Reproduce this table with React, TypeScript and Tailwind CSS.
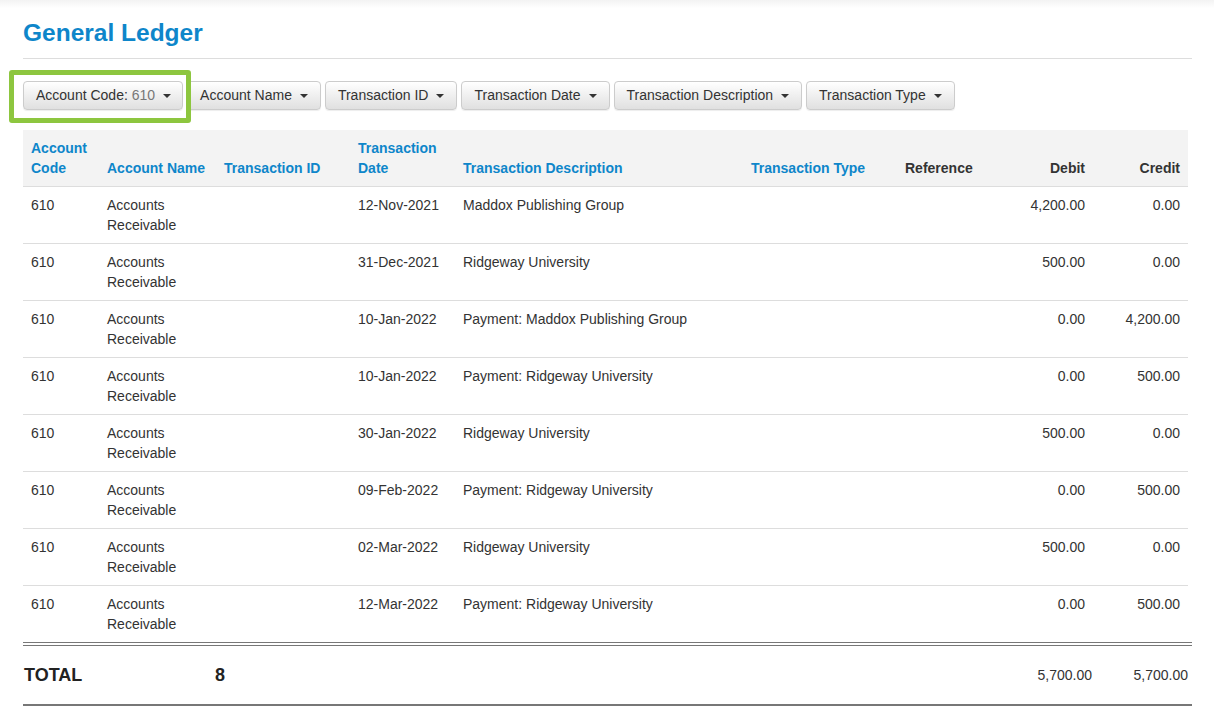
import { ReactNode } from "react"

const rows = [
  { date: "12-Nov-2021", desc: "Maddox Publishing Group", debit: "4,200.00", credit: "0.00" },
  { date: "31-Dec-2021", desc: "Ridgeway University", debit: "500.00", credit: "0.00" },
  { date: "10-Jan-2022", desc: "Payment: Maddox Publishing Group", debit: "0.00", credit: "4,200.00" },
  { date: "10-Jan-2022", desc: "Payment: Ridgeway University", debit: "0.00", credit: "500.00" },
  { date: "30-Jan-2022", desc: "Ridgeway University", debit: "500.00", credit: "0.00" },
  { date: "09-Feb-2022", desc: "Payment: Ridgeway University", debit: "0.00", credit: "500.00" },
  { date: "02-Mar-2022", desc: "Ridgeway University", debit: "500.00", credit: "0.00" },
  { date: "12-Mar-2022", desc: "Payment: Ridgeway University", debit: "0.00", credit: "500.00" },
]

function Caret() {
  return <span className="ml-2 inline-block h-0 w-0 border-x-[4px] border-t-[4px] border-x-transparent border-t-[#333] align-middle" />
}

function FilterButton({ children, first }: { children: ReactNode; first?: boolean }) {
  return (
    <button
      className={`flex h-[29px] items-center rounded-[4px] border border-[#ccc] bg-gradient-to-b from-white to-[#e0e0e0] text-[14px] text-[#333] shadow-[inset_0_1px_0_rgba(255,255,255,0.15),0_1px_1px_rgba(0,0,0,0.075)] ${
        first ? "pl-3 pr-[11px]" : "px-3"
      }`}
    >
      <span>{children}</span>
      <Caret />
    </button>
  )
}

export default function App() {
  return (
    <div className="relative min-h-[721px] w-[1214px] bg-white text-[14px] text-[#333]" style={{ fontFamily: '"Liberation Sans", Arial, sans-serif' }}>
      {/* faint top shadow */}
      <div className="absolute inset-x-0 top-0 h-2 bg-gradient-to-b from-[#f3f3f3] to-white" />

      <div className="relative px-[23px] pr-[22px]">
        <div className="flex h-[59px] items-center border-b border-[#ddd] pt-[8px]">
          <h1 className="text-[24.5px] font-bold leading-none text-[#0e86ca]">General Ledger</h1>
        </div>

        {/* filter bar */}
        <div className="mt-[22px] flex items-center gap-[4px]">
          <div className="relative z-10">
            <FilterButton first>
              Account Code: <span className="text-[#777]">610</span>
            </FilterButton>
            {/* highlight annotation */}
            <div className="pointer-events-none absolute -left-[14px] -right-[8px] -top-[11px] -bottom-[13px] rounded-[3px] border-[5px] border-[#8dc63f]" />
          </div>
          <FilterButton>Account Name</FilterButton>
          <FilterButton>Transaction ID</FilterButton>
          <FilterButton>Transaction Date</FilterButton>
          <FilterButton>Transaction Description</FilterButton>
          <FilterButton>Transaction Type</FilterButton>
        </div>

        {/* ledger table */}
        <table className="mt-[20px] w-[1165px] table-fixed border-collapse text-left leading-[20px]">
          <colgroup>
            <col className="w-[76px]" />
            <col className="w-[117px]" />
            <col className="w-[134px]" />
            <col className="w-[105px]" />
            <col className="w-[288px]" />
            <col className="w-[154px]" />
            <col className="w-[104px]" />
            <col className="w-[92px]" />
            <col className="w-[95px]" />
          </colgroup>
          <thead className="bg-[#f3f3f3]">
            <tr className="border-b border-[#ddd] align-bottom font-bold">
              <th className="p-2 text-[#0e86ca]">Account Code</th>
              <th className="p-2 text-[#0e86ca]">Account Name</th>
              <th className="p-2 text-[#0e86ca]">Transaction ID</th>
              <th className="p-2 text-[#0e86ca]">Transaction Date</th>
              <th className="p-2 text-[#0e86ca]">Transaction Description</th>
              <th className="p-2 text-[#0e86ca]">Transaction Type</th>
              <th className="p-2 text-[#333]">Reference</th>
              <th className="p-2 text-right text-[#333]">Debit</th>
              <th className="p-2 text-right text-[#333]">Credit</th>
            </tr>
          </thead>
          <tbody>
            {rows.map((r, i) => (
              <tr key={i} className="border-t border-[#ddd] align-top first:border-t-0">
                <td className="p-2">610</td>
                <td className="p-2">Accounts Receivable</td>
                <td className="p-2"></td>
                <td className="p-2">{r.date}</td>
                <td className="p-2">{r.desc}</td>
                <td className="p-2"></td>
                <td className="p-2"></td>
                <td className="p-2 text-right">{r.debit}</td>
                <td className="p-2 text-right">{r.credit}</td>
              </tr>
            ))}
          </tbody>
        </table>

        {/* totals */}
        <div className="border-t-[4px] border-double border-[#777]" />
        <div className="flex h-[60px] items-center border-b-2 border-[#777]">
          <div className="w-[192px] pl-px text-[18px] font-bold text-[#222]">TOTAL</div>
          <div className="text-[18px] font-bold text-[#222]">8</div>
          <div className="flex-1" />
          <div className="w-[96px] text-right">5,700.00</div>
          <div className="w-[100px] pr-[4px] text-right">5,700.00</div>
        </div>
      </div>
    </div>
  )
}
